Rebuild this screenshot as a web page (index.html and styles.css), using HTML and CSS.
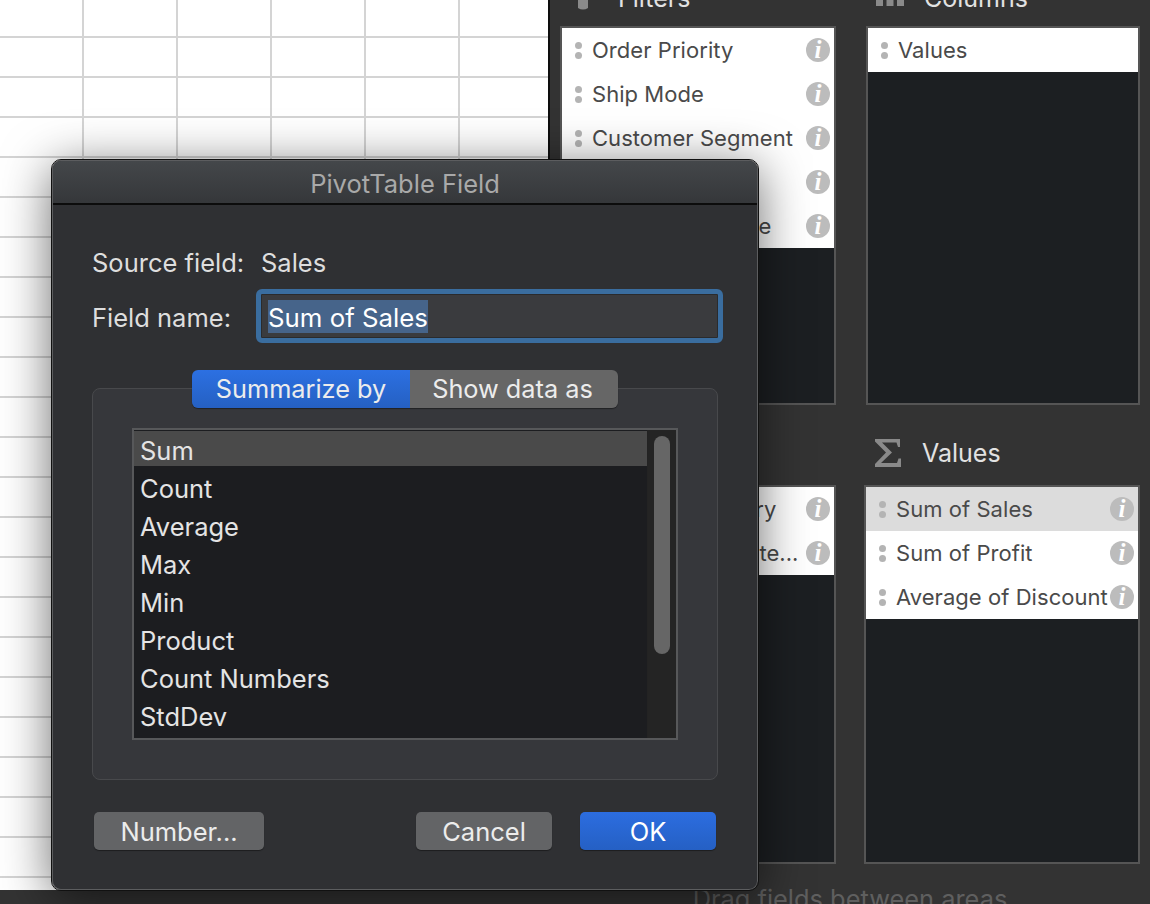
FILE: index.html
```html
<!DOCTYPE html>
<html lang="en">
<head>
	<meta charset="UTF-8">
	<title>PivotTable Field</title>
	<link rel="stylesheet" href="styles.css">
</head>
<body>
	<div class="wrp">
		<div class="sheet"></div>
		<div class="panel">
			<div class="areas">
				<div class="area">
					<div class="area-hd">
						<svg class="area-ico" viewBox="0 0 28 28"><path fill="#8a8a8a" d="M0 0h28L18 12v12q-5 3-10 0V12z"/></svg>
						<span>Filters</span>
					</div>
					<div class="box">
						<div class="field"><span class="grip"></span><span class="name">Order Priority</span><span class="info">i</span></div>
						<div class="field"><span class="grip"></span><span class="name">Ship Mode</span><span class="info">i</span></div>
						<div class="field"><span class="grip"></span><span class="name">Customer Segment</span><span class="info">i</span></div>
						<div class="field"><span class="grip"></span><span class="name">Province</span><span class="info">i</span></div>
						<div class="field"><span class="grip"></span><span class="name name-wide">Customer Name</span><span class="info">i</span></div>
					</div>
				</div>
				<div class="area">
					<div class="area-hd">
						<svg class="area-ico" viewBox="0 0 28 28"><path fill="#8a8a8a" d="M0 0h7v22H0zM10.500 0h7v22h-7zM21 0h7v22h-7z"/></svg>
						<span>Columns</span>
					</div>
					<div class="box">
						<div class="field"><span class="grip"></span><span class="name">Values</span></div>
					</div>
				</div>
				<div class="area area-low">
					<div class="area-hd">
						<span>Rows</span>
					</div>
					<div class="box">
						<div class="field"><span class="grip"></span><span class="name">Product Category</span><span class="info">i</span></div>
						<div class="field"><span class="grip"></span><span class="name">Product Sub-Cate...</span><span class="info">i</span></div>
					</div>
				</div>
				<div class="area area-low area-vals">
					<div class="area-hd">
						<svg class="area-ico" viewBox="0 0 28 28"><path fill="#8a8a8a" d="M1 0h25v8h-2l-1.500-4.500H8l10 10L7 24h16l1.500-4.500H27V28H1v-3l11-11.500L1 2.500z"/></svg>
						<span>Values</span>
					</div>
					<div class="box">
						<div class="field on"><span class="grip"></span><span class="name">Sum of Sales</span><span class="info">i</span></div>
						<div class="field"><span class="grip"></span><span class="name">Sum of Profit</span><span class="info">i</span></div>
						<div class="field"><span class="grip"></span><span class="name">Average of Discount</span><span class="info">i</span></div>
					</div>
				</div>
			</div>
			<div class="hint">Drag fields between areas</div>
		</div>

		<div class="dlg">
			<div class="dlg-title">PivotTable Field</div>
			<div class="dlg-body">
				<div class="line line-src"><span class="lbl">Source field:</span><span>Sales</span></div>
				<div class="line line-name">
					<span class="lbl">Field name:</span>
					<div class="input"><span class="sel">Sum of Sales</span></div>
				</div>
				<div class="group">
					<div class="tabs">
						<div class="tab on">Summarize by</div>
						<div class="tab">Show data as</div>
					</div>
					<div class="list">
						<div class="items">
							<div class="item on">Sum</div>
							<div class="item">Count</div>
							<div class="item">Average</div>
							<div class="item">Max</div>
							<div class="item">Min</div>
							<div class="item">Product</div>
							<div class="item">Count Numbers</div>
							<div class="item">StdDev</div>
						</div>
						<div class="track"><div class="thumb"></div></div>
					</div>
				</div>
				<div class="btns">
					<div class="btn btn-num">Number...</div>
					<div class="btn btn-cancel">Cancel</div>
					<div class="btn btn-ok">OK</div>
				</div>
			</div>
		</div>
	</div>
</body>
</html>
```

FILE: styles.css
```css
html,body{
	width: 100%;
	height: 100%;
	padding: 0px;
	margin: 0px;
}
body{
	font-family: Inter, "Noto Sans", sans-serif;
	background: #333;
}
.wrp{
	position: relative;
	width: 1150px;
	height: 904px;
	display: flex;
	overflow: hidden;
	background: #333;
}

/* sheet */
.sheet{
	width: 550px;
	height: 890px;
	flex: none;
	box-sizing: border-box;
	border-right: 2px solid #0e0e0e;
	background-color: #fff;
	background-image:
		repeating-linear-gradient(to right, transparent 0, transparent 82px, #d4d4d4 82px, #d4d4d4 84px, transparent 84px, transparent 94px),
		repeating-linear-gradient(to bottom, transparent 0, transparent 36px, #d4d4d4 36px, #d4d4d4 38px, transparent 38px, transparent 40px);
}

/* field list panel */
.panel{
	flex: 1;
	display: flex;
	flex-direction: column;
	align-items: center;
	margin-top: -29px;
}
.areas{
	display: grid;
	grid-template-columns: 276px 274px;
	column-gap: 30px;
	row-gap: 25px;
}
.area-vals{
	margin-left: -2px;
}
.area-hd{
	height: 55px;
	display: flex;
	align-items: center;
	padding: 0 0 2px 10px;
	gap: 20px;
	color: #e2e2e2;
	font-size: 25px;
	box-sizing: border-box;
}
.area-low .area-hd{
	padding-bottom: 10px;
}
.area-ico{
	width: 28px;
	height: 28px;
}
.box{
	height: 379px;
	box-sizing: border-box;
	border: 2px solid #555;
	background: #1c1f22;
}
.field{
	height: 44px;
	display: flex;
	align-items: center;
	background: #fff;
	color: #4a4a4a;
	font-size: 22px;
	letter-spacing: .05px;
	padding: 0 4px 0 13px;
}
.field.on{
	background: #dcdcdc;
}
.grip{
	width: 7px;
	height: 7px;
	margin-top: -10px;
	border-radius: 50%;
	background: #b4b4b4;
	box-shadow: 0 10px 0 #b4b4b4;
	flex: none;
}
.name{
	margin-left: 10px;
	flex: 1;
	min-width: 0;
	white-space: nowrap;
}
.name-wide{
	letter-spacing: .9px;
}
.info{
	width: 24px;
	height: 24px;
	flex: none;
	border-radius: 50%;
	background: #bcbcbc;
	color: #fff;
	font: italic bold 25px/24px "Liberation Serif", serif;
	text-align: center;
}
.hint{
	margin-top: 19px;
	color: #5f5f5f;
	font-size: 25.400px;
	white-space: nowrap;
}

/* dialog */
.dlg{
	position: absolute;
	left: 52px;
	top: 160px;
	width: 706px;
	height: 730px;
	box-sizing: border-box;
	border: 1px solid #5c5d5f;
	border-radius: 9px;
	outline: 1px solid #111;
	background: #2f3033;
	box-shadow: 0 8px 50px rgba(0,0,0,.6);
	color: #dedede;
	font-size: 25.500px;
}
.dlg-title{
	height: 42px;
	border-bottom: 2px solid #0c0c0c;
	border-radius: 8px 8px 0 0;
	background: linear-gradient(#44474a, #35373a);
	color: #a9a9a9;
	font-size: 25.500px;
	line-height: 45px;
	text-align: center;
}
.dlg-body{
	padding: 0 33px 0 39px;
}
.line{
	display: flex;
	align-items: center;
}
.line-src{
	padding-top: 39px;
	height: 37px;
}
.line-src .lbl{
	width: 169px;
}
.line-name{
	margin-top: 8px;
}
.line-name .lbl{
	width: 164px;
	padding-top: 3px;
}
.input{
	width: 467px;
	height: 54px;
	box-sizing: border-box;
	border: 5px solid #3a6d9f;
	border-radius: 6px;
	padding: 6px 7px;
	background: #3a3b3e;
	box-shadow: inset 0 0 0 1px #2a2b2d;
	color: #fff;
	font-size: 25.800px;
	line-height: 36px;
}
.sel{
	display: inline-block;
	height: 33px;
	vertical-align: top;
	background: #46648a;
}
.group{
	position: relative;
	width: 626px;
	height: 392px;
	margin-top: 45px;
	box-sizing: border-box;
	border: 1px solid #48494c;
	border-radius: 8px;
	background: #36373b;
	padding: 39px 39px 0;
}
.tabs{
	position: absolute;
	left: 99px;
	top: -19px;
	display: flex;
	height: 38px;
	border-radius: 6px;
	overflow: hidden;
	box-shadow: 0 1px 1px rgba(0,0,0,.4);
	font-size: 25.300px;
	line-height: 38px;
	color: #ececec;
	text-align: center;
}
.tab{
	width: 208px;
	box-sizing: border-box;
	padding-right: 3px;
	background: #666;
}
.tab.on{
	width: 218px;
	padding-right: 0;
	background: linear-gradient(#2c70e2, #2560c2);
}
.list{
	display: flex;
	height: 312px;
	box-sizing: border-box;
	border: 2px solid #57585a;
	background: #1c1d20;
}
.items{
	flex: 1;
	padding-top: 1px;
	overflow: hidden;
	border-right: 1px solid #232323;
}
.item{
	height: 38px;
	padding-left: 6px;
	color: #e4e4e4;
	font-size: 25.500px;
	line-height: 38px;
}
.item.on{
	height: 35px;
	margin-bottom: 4px;
	line-height: 40px;
	background: #4a4a4a;
}
.track{
	width: 28px;
	background: #242424;
	padding: 6px 6px 0;
	box-sizing: border-box;
}
.thumb{
	height: 218px;
	border-radius: 8px;
	background: #666;
}
.btns{
	display: flex;
	width: 626px;
	box-sizing: border-box;
	margin-top: 32px;
	padding-left: 2px;
}
.btn{
	height: 38px;
	box-sizing: border-box;
	border-radius: 5px;
	background: #636466;
	box-shadow: 0 1px 1px rgba(0,0,0,.4);
	color: #ececec;
	font-size: 25.500px;
	line-height: 39px;
	text-align: center;
}
.btn-num{
	width: 170px;
}
.btn-cancel{
	width: 136px;
	margin-left: auto;
}
.btn-ok{
	width: 136px;
	margin-left: 28px;
	margin-right: 2px;
	background: linear-gradient(#2c6de0, #2560c4);
	color: #fff;
}
```
